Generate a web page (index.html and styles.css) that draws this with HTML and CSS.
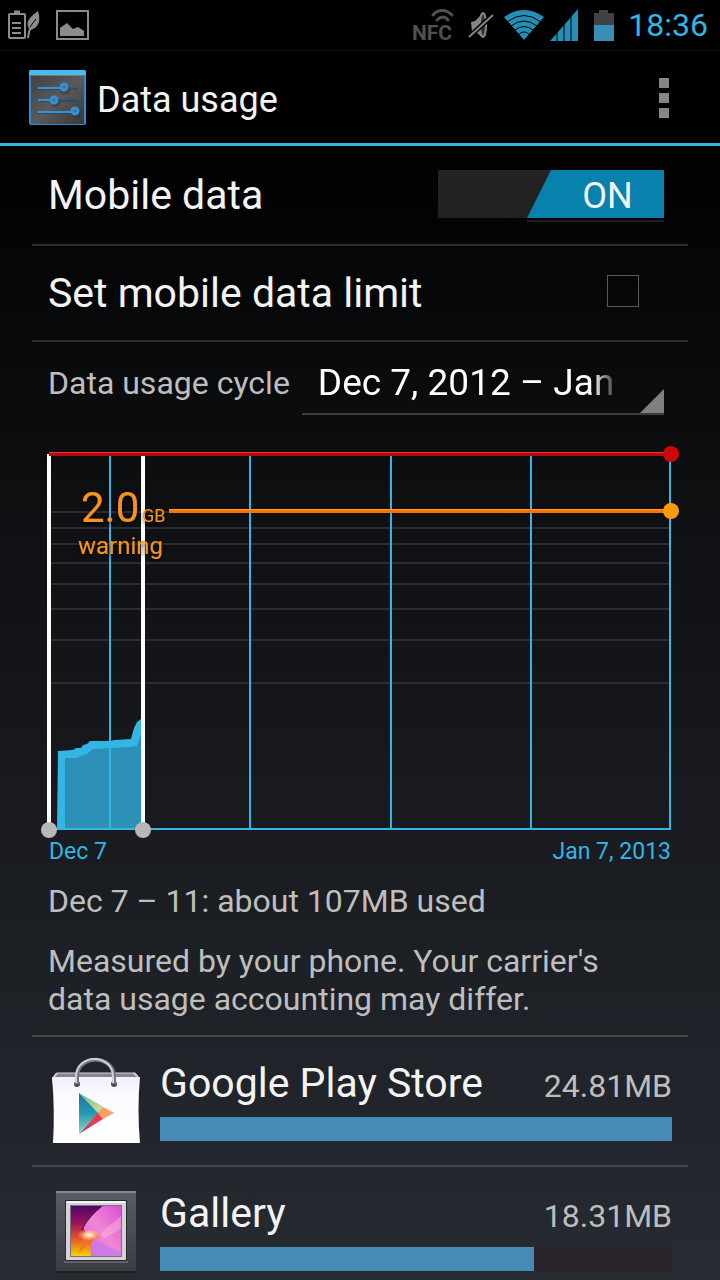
FILE: index.html
```html
<!DOCTYPE html>
<html lang="en">
<head>
    <meta charset="UTF-8">
    <meta name="viewport" content="width=device-width, initial-scale=1.0">
    <title>Data usage</title>
    <link rel="stylesheet" href="styles.css">
</head>
<body>
    <div class="screen">
        <div class="status-bar">
            <div class="status-left">
                <!-- battery saver -->
                <svg width="34" height="30" viewBox="0 0 34 30" fill="none" stroke="#8c8c8c">
                    <rect x="2" y="4" width="16" height="24" rx="1" stroke-width="2"/>
                    <path d="M7 2h6" stroke-width="3"/>
                    <path d="M5 13h9M5 18h9M5 23h9" stroke-width="2"/>
                    <path d="M31 1c3 9 1 17-8 19-6-8 0-13 8-19z" fill="#8c8c8c" stroke="none"/>
                    <path d="M29 9l-6 8" stroke="#000" stroke-width="1"/>
                    <path d="M24 18c-3 3-2 6-3 10" stroke-width="2"/>
                </svg>
                <!-- picture notification -->
                <svg width="33" height="30" viewBox="0 0 33 30">
                    <rect x="1" y="1" width="31" height="28" fill="none" stroke="#8c8c8c" stroke-width="2"/>
                    <path d="M4 26v-8l7-5 6 6 5-2 6 4v5z" fill="#8c8c8c"/>
                </svg>
            </div>
            <div class="status-right">
                <svg class="nfc" width="44" height="34" viewBox="0 0 44 34">
                    <text x="0" y="32">NFC</text>
                    <path d="M21 7c5-6 13-6 19 0M25 12c4-4 8-4 11 0" fill="none" stroke="#505050" stroke-width="3" stroke-linecap="round"/>
                </svg>
                <svg class="mute" width="26" height="30" viewBox="0 0 26 30">
                    <path d="M3 12l4-1 8-8c5 5 5 18 0 25l-6-5-5-1z" fill="#858585"/>
                    <ellipse cx="15" cy="15" rx="3" ry="12" fill="#303030" stroke="#858585" stroke-width="2"/>
                    <path d="M2 26L25 5" stroke="#000" stroke-width="5"/>
                    <path d="M1 27L25 5" stroke="#858585" stroke-width="2"/>
                </svg>
                <svg class="wifi" width="40" height="32" viewBox="0 0 40 32">
                    <path d="M0 8Q20-6 40 8L20 31z" fill="#268db5"/>
                    <path d="M3 13Q20 0 37 13M7 17Q20 7 33 17M11 21Q20 14 29 21M15 25Q20 21 25 25" fill="none" stroke="#000" stroke-width="1"/>
                </svg>
                <svg class="signal" width="28" height="32" viewBox="0 0 28 32">
                    <path d="M0 32L28 0v32z" fill="#268db5"/>
                    <path d="M7 0v32M14 0v32M21 0v32" stroke="#000" stroke-width="1"/>
                </svg>
                <svg class="battery" width="20" height="31" viewBox="0 0 20 31">
                    <path d="M0 3h5V0h9v3h6v12H0z" fill="#424242"/>
                    <path d="M0 15h20v16H0z" fill="#378fb9"/>
                </svg>
                <span class="clock">18:36</span>
            </div>
        </div>

        <header class="action-bar">
            <svg class="settings-icon" width="58" height="56" viewBox="0 0 58 56">
                <defs>
                    <linearGradient id="panel" x1="0" y1="0" x2="1" y2="1">
                        <stop offset="0" stop-color="#414141"/>
                        <stop offset=".5" stop-color="#5a5a5a"/>
                        <stop offset="1" stop-color="#383838"/>
                    </linearGradient>
                </defs>
                <rect x="0" y="0" width="57" height="55" rx="2" fill="#2f8bd6"/>
                <path d="M0 5V2q0-2 2-2h53q2 0 2 2v3z" fill="#42bdf8"/>
                <rect x="2" y="5" width="53" height="49" fill="url(#panel)"/>
                <path d="M2 5h53" stroke="#9ba5aa" stroke-width="1"/>
                <path d="M9 19h40M9 31h40M9 43h40" stroke="#173c66" stroke-width="1"/>
                <path d="M31 18h18M25 30h24" stroke="#22588f" stroke-width="1"/>
                <path d="M9 18h22M9 30h12M9 42h33" stroke="#3392dc" stroke-width="2"/>
                <g fill="#333" opacity=".5">
                    <circle cx="36" cy="20" r="5"/><circle cx="26" cy="32" r="5"/><circle cx="47" cy="43" r="5"/>
                </g>
                <g fill="#52677a" stroke="#3392dc" stroke-width="3">
                    <circle cx="35" cy="17" r="3"/><circle cx="25" cy="30" r="3"/><circle cx="46" cy="41" r="3"/>
                </g>
            </svg>
            <h1>Data usage</h1>
            <button class="menu-button" type="button" aria-label="More options"><i></i><i></i><i></i></button>
        </header>

        <main class="content">
            <div class="row row-switch">
                <label class="row-title" for="mobile-data">Mobile data</label>
                <button class="switch" id="mobile-data" type="button" role="switch" aria-checked="true"><span>ON</span></button>
            </div>
            <div class="row row-limit">
                <label class="row-title" for="data-limit">Set mobile data limit</label>
                <input type="checkbox" id="data-limit">
            </div>
            <div class="cycle">
                <label for="cycle-select">Data usage cycle</label>
                <div class="spinner">
                    <select id="cycle-select">
                        <option>Dec 7, 2012 – Jan 7, 2013</option>
                        <option>Nov 7 – Dec 7, 2012</option>
                    </select>
                </div>
            </div>

            <svg class="chart" viewBox="0 0 720 430" role="img" aria-label="Mobile data usage from Dec 7 to Jan 7, 2013">
                <defs>
                    <filter id="shadow" x="-20%" y="-20%" width="140%" height="150%">
                        <feDropShadow dx="0" dy="2" stdDeviation="2" flood-color="#000" flood-opacity=".8"/>
                    </filter>
                </defs>
                <!-- log scale lines -->
                <path class="grid" d="M50 72h620M50 88h620M50 104h620M50 123h620M50 144h620M50 169h620M50 200h620M50 243h620"/>
                <!-- used data -->
                <path class="series-line" d="M57 389L58 311 73 310 76 308 81 308 83 305 87 304 90 301 110 301 115 300 131 299 134 288 137 282 141 279H143V389z"/>
                <path class="series-fill" d="M65 388V318h11l11-4 6-5 37-2 7-1 2-6 4-10V388z"/>
                <!-- weeks -->
                <path class="week" d="M110 16V389M250 16V389M391 16V389M531 16V389M670 16V389M50 389H671"/>
                <!-- selected range -->
                <path class="sweep" d="M49 14V388M143 16V388"/>
                <circle class="handle" cx="49" cy="390" r="8"/>
                <circle class="handle" cx="143" cy="390" r="8"/>
                <!-- limit -->
                <path d="M49 12H670v4H49z" fill="#bf0609"/>
                <path d="M49 12H670v1H49z" fill="#d84042"/>
                <circle cx="671" cy="14" r="8" fill="#d00506"/>
                <!-- warning -->
                <path d="M169 69H670v4H169z" fill="#ff7200"/>
                <path d="M169 69H670v1H169z" fill="#ff9d3c"/>
                <circle cx="671" cy="71" r="8" fill="#fe9a09"/>
                <g class="warning" filter="url(#shadow)">
                    <text x="81" y="82" class="warning-value">2.0</text>
                    <text x="142" y="82" class="warning-unit">GB</text>
                    <text x="78" y="114" class="warning-label">warning</text>
                </g>
                <text x="49" y="419" class="date">Dec 7</text>
                <text x="671" y="419" class="date" text-anchor="end">Jan 7, 2013</text>
            </svg>

            <div class="summary">
                <p>Dec 7 – 11: about 107MB used</p>
                <p>Measured by your phone. Your carrier's data usage accounting may differ.</p>
            </div>

            <ul class="app-list">
                <li class="app">
                    <svg class="app-icon" viewBox="0 0 96 96">
                        <defs>
                            <linearGradient id="bag" x1="0" y1="0" x2="0" y2="1">
                                <stop offset="0" stop-color="#f1f0fb"/>
                                <stop offset=".3" stop-color="#fbfaff"/>
                                <stop offset="1" stop-color="#fff"/>
                            </linearGradient>
                            <linearGradient id="playblue" x1="0" y1="0" x2="0" y2="1">
                                <stop offset="0" stop-color="#1c719f"/>
                                <stop offset=".5" stop-color="#2797b4"/>
                                <stop offset="1" stop-color="#82d8b5"/>
                            </linearGradient>
                            <linearGradient id="playgreen" x1="0" y1="0" x2="1" y2="1">
                                <stop offset="0" stop-color="#64b99f"/>
                                <stop offset="1" stop-color="#dfe48e"/>
                            </linearGradient>
                            <linearGradient id="playred" x1="0" y1="1" x2="1" y2="0">
                                <stop offset="0" stop-color="#8c3a93"/>
                                <stop offset=".6" stop-color="#e63f4c"/>
                                <stop offset="1" stop-color="#f0343c"/>
                            </linearGradient>
                        </defs>
                        <path d="M8 20h80l3 5v5H4v-5z" fill="#85858d"/>
                        <path d="M9 20h78" stroke="#d6d5dd" stroke-width="1"/>
                        <path d="M4 24h88q-3 33 0 66H5q2-33-1-66z" fill="url(#bag)"/>
                        <path d="M6 24l3-4M90 24l-4-4" stroke="#ccc" stroke-width="2"/>
                        <g fill="#4c4b54"><circle cx="29" cy="31" r="3"/><circle cx="66" cy="31" r="3"/></g>
                        <path d="M29 31V24c0-23 37-23 37 0v7" fill="none" stroke="#777684" stroke-width="4"/>
                        <path d="M28 30V24c0-24 37-24 37 0v6" fill="none" stroke="#d0cfda" stroke-width="2"/>
                        <path d="M31 40L51 60 31 80z" fill="url(#playblue)"/>
                        <path d="M31 40L56 54 50 60z" fill="url(#playgreen)"/>
                        <path d="M55 54l11 6-11 6-5-6z" fill="#fb9d67"/>
                        <path d="M31 81L50 60l5 6z" fill="url(#playred)"/>
                    </svg>
                    <div class="app-body">
                        <div class="app-head">
                            <span class="app-name">Google Play Store</span>
                            <span class="app-size">24.81MB</span>
                        </div>
                        <div class="bar"><div class="bar-fill" style="width: 100%"></div></div>
                    </div>
                </li>
                <li class="app">
                    <svg class="app-icon" viewBox="0 0 96 96">
                        <defs>
                            <linearGradient id="frame" x1="0" y1="0" x2="0" y2="1">
                                <stop offset="0" stop-color="#5b5b63"/>
                                <stop offset="1" stop-color="#3b3b42"/>
                            </linearGradient>
                            <linearGradient id="photo" x1="0" y1="0" x2="0" y2="1">
                                <stop offset="0" stop-color="#4b0767"/>
                                <stop offset=".35" stop-color="#a0135d"/>
                                <stop offset=".65" stop-color="#e75327"/>
                                <stop offset="1" stop-color="#f8d000"/>
                            </linearGradient>
                            <linearGradient id="petal" x1="0" y1="1" x2="1" y2="0">
                                <stop offset="0" stop-color="#d85bea"/>
                                <stop offset=".5" stop-color="#f287d5"/>
                                <stop offset="1" stop-color="#d84fd5"/>
                            </linearGradient>
                            <radialGradient id="glow">
                                <stop offset="0" stop-color="#fff"/>
                                <stop offset=".4" stop-color="#ffd5a0" stop-opacity=".8"/>
                                <stop offset="1" stop-color="#ff9a60" stop-opacity="0"/>
                            </radialGradient>
                        </defs>
                        <rect x="8" y="10" width="80" height="80" fill="#15171b" opacity=".6"/>
                        <rect x="8" y="8" width="80" height="80" fill="url(#frame)"/>
                        <path d="M8 9h80" stroke="#85858c" stroke-width="2"/>
                        <path d="M17 17h62v62H17z" fill="#29292f"/>
                        <path d="M16 79h64" stroke="#8e8e92" stroke-width="1"/>
                        <path d="M18 18h60v59H18z" fill="#d3d2d7"/>
                        <path d="M19 19h58" stroke="#f2f2f2" stroke-width="2"/>
                        <path d="M22 22h52v52H22z" fill="#77727b"/>
                        <path d="M23 23h50v50H23z" fill="url(#photo)"/>
                        <path d="M54 23h19v50H43q-2-10 3-18-9-5-11-11Q43 32 54 23z" fill="url(#petal)"/>
                        <path d="M54 23Q39 35 34 47" fill="none" stroke="#3b093f" stroke-width="1"/>
                        <path d="M52 51L73 33v13L56 55z" fill="#ffb3da" opacity=".5"/>
                        <path d="M43 73l2-17 28 13v4z" fill="#cb7bea" opacity=".8"/>
                        <path d="M37 49q11 0 15 5l-11 6-10 10z" fill="#ef732b" opacity=".8"/>
                        <ellipse cx="41" cy="52" rx="12" ry="6" fill="url(#glow)"/>
                    </svg>
                    <div class="app-body">
                        <div class="app-head">
                            <span class="app-name">Gallery</span>
                            <span class="app-size">18.31MB</span>
                        </div>
                        <div class="bar"><div class="bar-fill" style="width: 73%"></div></div>
                    </div>
                </li>
            </ul>
        </main>
    </div>
</body>
</html>
```
FILE: styles.css
```css
* {
    box-sizing: border-box;
}
body {
    margin: 0;
    background-color: #000;
    color: #f3f3f3;
    font-family: Roboto, "Noto Sans", sans-serif;
}
h1, p, ul {
    margin: 0;
    padding: 0;
    font-weight: normal;
}
button, select {
    font-family: inherit;
    color: inherit;
    border: 0;
    border-radius: 0;
    background: none;
}
.screen {
    display: flex;
    flex-direction: column;
    height: 100vh;
    overflow: hidden;
    background: linear-gradient(#000 0, #000 10%, #0b0c0e 32%, #272b32 100%);
}

/* status bar */
.status-bar {
    display: flex;
    flex: none;
    justify-content: space-between;
    height: 51px;
    padding: 0 12px 0 7px;
    background-color: #000;
    border-bottom: 1px solid #0d0f0f;
}
.status-left, .status-right {
    display: flex;
    align-items: center;
}
.status-left {
    gap: 15px;
}
.nfc {
    margin-right: 12px;
}
.mute {
    margin-right: 10px;
}
.wifi {
    margin-right: 6px;
}
.signal {
    margin-right: 16px;
}
.battery {
    margin-right: 14px;
}
.nfc text {
    fill: #505050;
    font-size: 21px;
    font-weight: bold;
}
.clock {
    color: #33b5e5;
    font-size: 32px;
}

/* action bar */
.action-bar {
    display: flex;
    flex: none;
    align-items: center;
    height: 95px;
    padding: 2px 41px 0 29px;
    border-bottom: 3px solid #33b5e5;
}
.action-bar h1 {
    flex: 1;
    margin-left: 10px;
    padding-top: 4px;
    font-size: 36px;
}
.menu-button {
    display: flex;
    flex-direction: column;
    gap: 5px;
    padding: 10px;
    cursor: pointer;
}
.menu-button i {
    width: 10px;
    height: 10px;
    background-color: #868686;
}

/* settings rows */
.content {
    flex: 1;
    min-height: 0;
    overflow-y: auto;
    scrollbar-width: none;
}
.row {
    display: flex;
    align-items: center;
    justify-content: space-between;
    margin: 0 32px;
    padding: 0 24px 0 16px;
    border-bottom: 2px solid #2d2e30;
}
.row-switch {
    height: 100px;
}
.row-limit {
    height: 96px;
    padding-right: 49px;
}
.row-title {
    font-size: 41px;
}
.switch {
    position: relative;
    width: 226px;
    height: 48px;
    margin-bottom: 2px;
    padding: 0;
    background-color: #222;
    cursor: pointer;
}
.switch span {
    display: block;
    width: 137px;
    height: 48px;
    margin-left: auto;
    padding-left: 24px;
    background-color: #0881ad;
    clip-path: polygon(24px 0, 100% 0, 100% 100%, 0 100%);
    font-size: 36px;
    line-height: 52px;
}
.switch::after {
    content: "";
    position: absolute;
    top: 50px;
    right: 0;
    width: 137px;
    height: 2px;
    background-color: #1d1e20;
}
.row-limit input {
    appearance: none;
    width: 32px;
    height: 32px;
    margin: 0 0 4px;
    border: 1px solid #58595b;
}
.row-limit input:checked {
    background-color: #33b5e5;
}
.cycle {
    display: flex;
    align-items: center;
    gap: 12px;
    height: 84px;
    padding: 0 56px 0 48px;
    color: #bebebe;
    font-size: 32px;
}
.cycle label {
    margin-bottom: 2px;
}
.spinner {
    position: relative;
    flex: 1;
    min-width: 0;
    border-bottom: 2px solid #3c3d3f;
}
.spinner::after {
    content: "";
    position: absolute;
    right: 0;
    bottom: 0;
    width: 24px;
    height: 24px;
    background-color: #808080;
    clip-path: polygon(100% 0, 100% 100%, 0 100%);
    pointer-events: none;
}
.spinner select {
    appearance: none;
    display: block;
    width: 100%;
    height: 60px;
    padding: 0 48px 2px 16px;
    color: #fff;
    font-size: 37px;
    text-overflow: clip;
    -webkit-mask-image: linear-gradient(to left, transparent 44px, #000 72px);
    mask-image: linear-gradient(to left, transparent 44px, #000 72px);
}
.spinner option {
    background-color: #222;
}

/* chart */
.chart {
    display: block;
    width: 100%;
    margin-top: 14px;
}
.grid {
    stroke: #2c2d2e;
    stroke-width: 2;
}
.series-line {
    fill: #33b5e5;
}
.series-fill {
    fill: #2d91b7;
}
.week {
    fill: none;
    stroke: #33b5e5;
    stroke-width: 2;
}
.sweep {
    stroke: #fff;
    stroke-width: 4;
}
.handle {
    fill: #b7b7b7;
}
.warning {
    fill: #f7931d;
}
.warning-value {
    font-size: 42px;
}
.warning-unit {
    font-size: 18px;
}
.warning-label {
    font-size: 24px;
}
.date {
    fill: #33b5e5;
    font-size: 23px;
}
.summary {
    padding: 12px 56px 17px 48px;
    color: #bebebe;
    font-size: 32px;
    line-height: 38px;
}
.summary p + p {
    margin-top: 22px;
}

/* apps */
.app-list {
    margin: 0 32px;
    list-style: none;
}
.app {
    display: flex;
    gap: 16px;
    height: 130px;
    padding: 16px 16px 0;
    border-top: 2px solid #43464a;
}
.app-icon {
    flex: none;
    width: 96px;
    height: 96px;
}
.app-body {
    flex: 1;
    min-width: 0;
}
.app-head {
    display: flex;
    align-items: baseline;
    justify-content: space-between;
    height: 64px;
    line-height: 60px;
}
.app-name {
    font-size: 41px;
}
.app-size {
    color: #bebebe;
    font-size: 32px;
}
.bar {
    height: 24px;
    background-color: #29252b;
}
.bar-fill {
    height: 100%;
    background-color: #468bb8;
}
```
